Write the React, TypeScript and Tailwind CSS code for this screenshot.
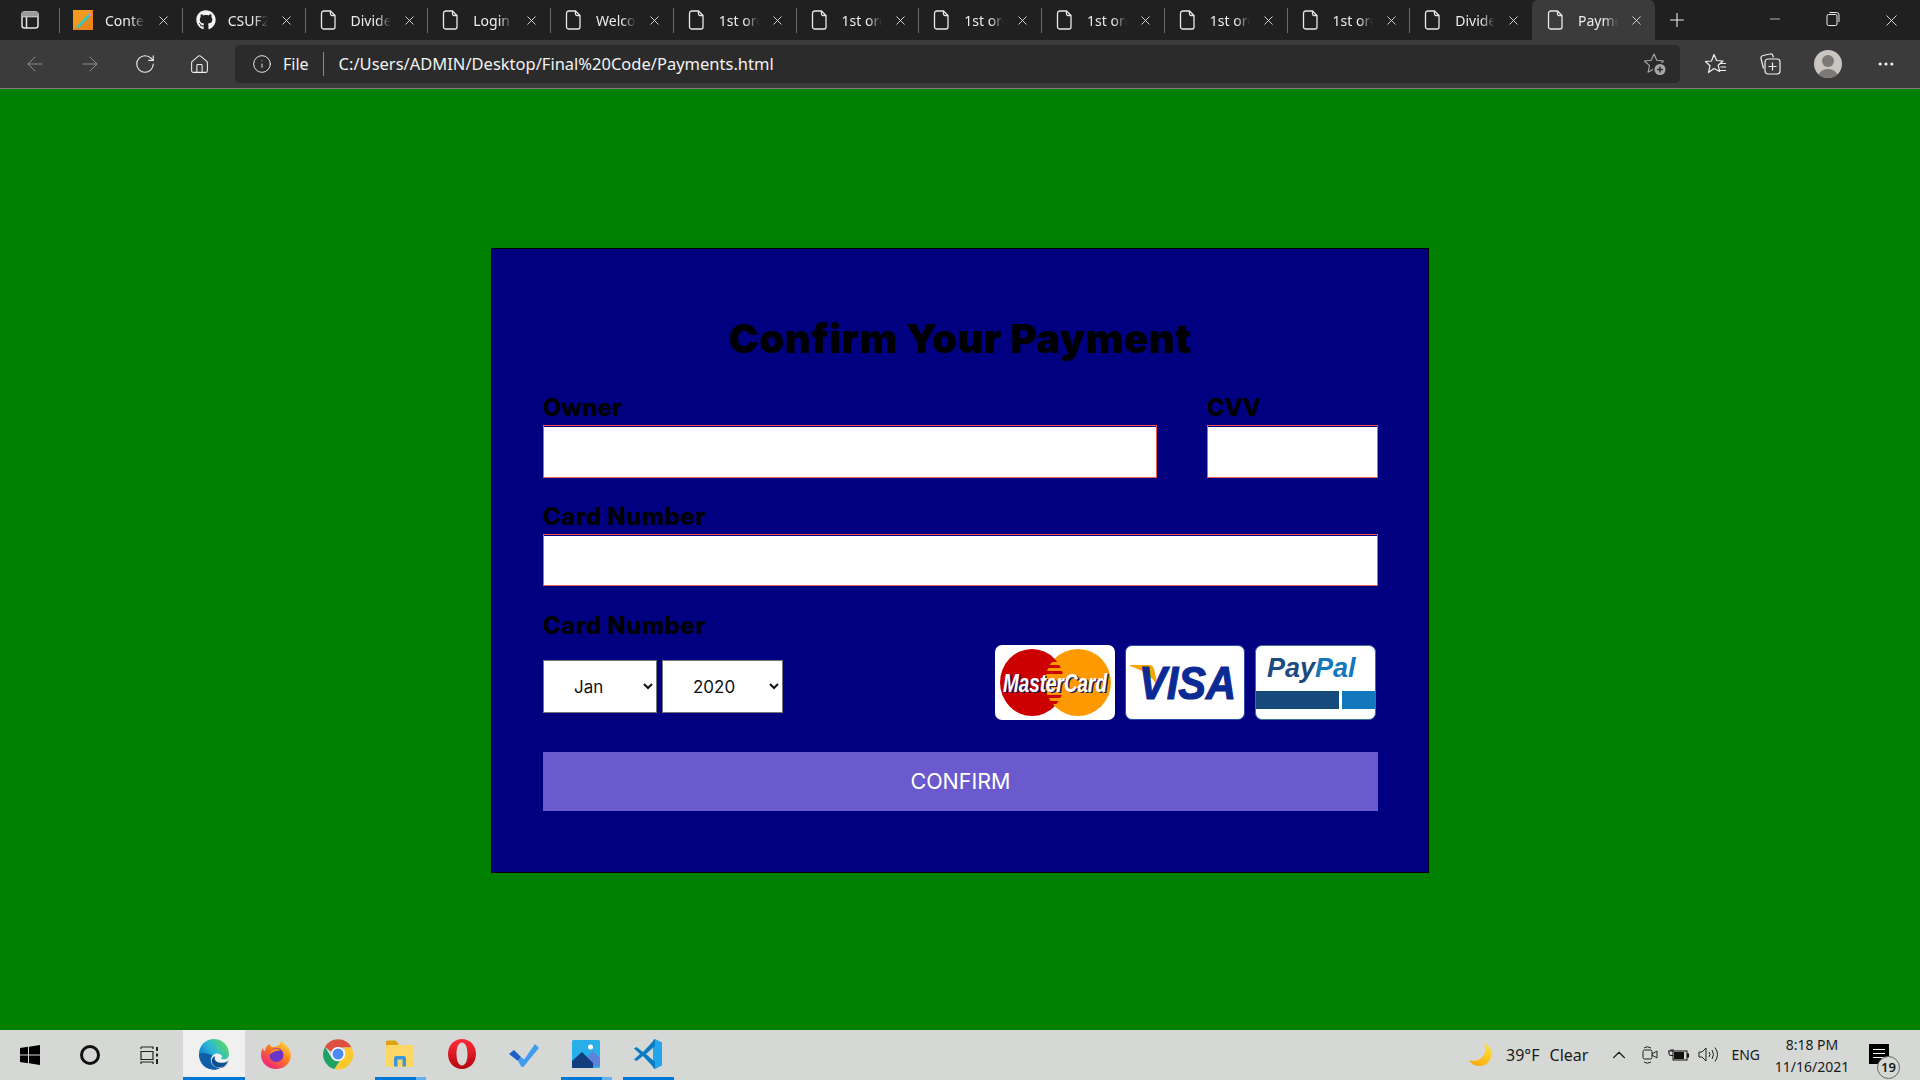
import { ArrowLeft, ArrowRight, ChevronUp, Home, Info, Minus, MoreHorizontal, Plus, RotateCw, X } from "lucide-react";
import { FaGithub } from "react-icons/fa";
import type { ReactNode } from "react";

type Tab = { title: string; icon: "pencil" | "github" | "file"; active?: boolean };

const tabs: Tab[] = [
  { title: "Content", icon: "pencil" },
  { title: "CSUF2", icon: "github" },
  { title: "Divide", icon: "file" },
  { title: "Login", icon: "file" },
  { title: "Welcome", icon: "file" },
  { title: "1st order", icon: "file" },
  { title: "1st order", icon: "file" },
  { title: "1st order", icon: "file" },
  { title: "1st order", icon: "file" },
  { title: "1st order", icon: "file" },
  { title: "1st order", icon: "file" },
  { title: "Divide", icon: "file" },
  { title: "Payment", icon: "file", active: true },
];

function FileIcon() {
  return (
    <svg width="20" height="22" viewBox="0 0 20 22" fill="none" stroke="#e8e8e8" strokeWidth="1.3">
      <path d="M4.5 2h7l4.500 4.500V18a2 2 0 0 1-2 2h-9.500a2 2 0 0 1-2-2V4.500A2.500 2.500 0 0 1 4.500 2z" />
      <path d="M11.500 2v3a1.500 1.500 0 0 0 1.500 1.500h3" />
    </svg>
  );
}

function PencilIcon() {
  return (
    <svg width="20" height="20" viewBox="0 0 20 20">
      <rect width="20" height="20" fill="#f29a1f" />
      <path d="M0 20 L20 0 V20 Z" fill="#e8861a" />
      <path d="M4 16 L15 4 L17.500 6 L6.500 17.500 L3 18 Z" fill="#3fc7b3" />
      <path d="M15 4 L16.500 2.500 L19 4.500 L17.500 6 Z" fill="#e88ab0" />
    </svg>
  );
}

function TabItem({ tab, first }: { tab: Tab; first: boolean }) {
  const showLine = !tab.active && !first;
  return (
    <div
      className={
        tab.active
          ? "relative flex h-10 w-[123px] shrink-0 items-center rounded-t-[6px] bg-[#3b3b3b] pl-[14px]"
          : "relative flex h-[40px] w-[122.75px] shrink-0 items-center pl-[14px]"
      }
    >
      {(showLine || first) && <span className="absolute left-0 top-2 h-[25px] w-px bg-[#6b6b6b]" />}
      <span className="flex w-[32px] shrink-0 items-center">
        {tab.icon === "pencil" && <PencilIcon />}
        {tab.icon === "github" && <FaGithub size={20} color="#f2f2f2" />}
        {tab.icon === "file" && <FileIcon />}
      </span>
      <span className="w-[40px] shrink-0 overflow-hidden whitespace-nowrap text-[14px] text-[#ececec] [mask-image:linear-gradient(90deg,#000_65%,transparent)]">
        {tab.title}
      </span>
      <X className="ml-[11px] shrink-0 text-[#e6e6e6]" size={15} strokeWidth={1.4} />
    </div>
  );
}

function TitleBar() {
  return (
    <div className="flex h-10 shrink-0 items-center bg-[#202020]">
      <div className="flex w-[59px] shrink-0 justify-center">
        <svg width="18" height="18" viewBox="0 0 18 18" fill="none" stroke="#e4e4e4" strokeWidth="1.500">
          <rect x="1" y="1" width="16" height="16" rx="2.500" />
          <path d="M1 5.500h16M5.500 5.500V17" />
          <path d="M1 1h16v4.500H1z" fill="#9b9b9b" stroke="none" />
        </svg>
      </div>
      {tabs.map((t, i) => (
        <TabItem key={i} tab={t} first={i === 0} />
      ))}
      <div className="flex w-[44px] justify-center">
        <Plus size={22} strokeWidth={1.2} className="text-[#ececec]" />
      </div>
      <div className="ml-auto flex">
        <div className="flex w-[58px] justify-center">
          <Minus size={16} strokeWidth={1.1} className="text-[#ececec]" />
        </div>
        <div className="flex w-[58px] justify-center">
          <svg width="14" height="15" viewBox="0 0 14 15" fill="none" stroke="#ececec" strokeWidth="1">
            <rect x="1" y="3.500" width="10" height="11" rx="1.500" />
            <path d="M3.500 1.500h7a2.500 2.500 0 0 1 2.500 2.500v7" />
          </svg>
        </div>
        <div className="flex w-[58px] justify-center">
          <X size={19} strokeWidth={1.1} className="text-[#ececec]" />
        </div>
      </div>
    </div>
  );
}

function ToolBtn({ w, children }: { w: string; children: ReactNode }) {
  return <div className={`flex h-full shrink-0 items-center justify-center ${w}`}>{children}</div>;
}

function ToolBar() {
  return (
    <div className="flex h-[49px] shrink-0 items-center border-b border-[#7d7d7d] bg-[#3b3b3b] pl-[7px]">
      <ToolBtn w="w-[55px]">
        <ArrowLeft size={24} strokeWidth={1} className="text-[#8c8c8c]" />
      </ToolBtn>
      <ToolBtn w="w-[55px]">
        <ArrowRight size={24} strokeWidth={1} className="text-[#8c8c8c]" />
      </ToolBtn>
      <ToolBtn w="w-[55px]">
        <RotateCw size={22} strokeWidth={1.2} className="text-[#efefef]" />
      </ToolBtn>
      <ToolBtn w="w-[55px]">
        <Home size={21} strokeWidth={1.2} className="text-[#efefef]" />
      </ToolBtn>
      <div className="ml-[8px] flex h-[38px] w-[1445px] shrink-0 items-center rounded-[5px] bg-[#2b2b2b] pl-[17px] pr-[13px] text-[#f2f2f2]">
        <Info size={20} strokeWidth={1.1} />
        <span className="ml-[11px] text-[16px]">File</span>
        <span className="ml-[14px] h-[24px] w-px bg-[#8a8a8a]" />
        <span className="ml-[15px] text-[16.5px]">C:/Users/ADMIN/Desktop/Final%20Code/Payments.html</span>
        <svg className="ml-auto" width="24" height="24" viewBox="0 0 24 24" fill="none" stroke="#a8a8a8" strokeWidth="1.100">
          <path d="M11 2l2.800 6.200 6.700.8-5 4.600 1.400 6.600-5.900-3.400L5.100 20.200l1.400-6.600-5-4.600 6.700-.8z" strokeLinejoin="round" />
          <circle cx="17" cy="17.500" r="7" fill="#2b2b2b" stroke="none" />
          <circle cx="17" cy="17.500" r="5.500" fill="#a8a8a8" stroke="none" />
          <path d="M17 14.500v6M14 17.500h6" stroke="#2b2b2b" strokeWidth="1.500" />
        </svg>
      </div>
      <ToolBtn w="w-[56px] ml-[8px]">
        <svg width="24" height="24" viewBox="0 0 24 24" fill="none" stroke="#efefef" strokeWidth="1.200">
          <path d="M10 2.500l2.600 6 6.400.5-4.800 4.300 1.500 6.200L10 16.500l-5.500 4 1.500-6.800L1.500 9.500 7.500 9z" strokeLinejoin="round" />
          <path d="M16 11.500h6M16.500 15h5.500M15.500 18.500h6.500" />
        </svg>
      </ToolBtn>
      <ToolBtn w="w-[52px]">
        <svg width="24" height="24" viewBox="0 0 24 24" fill="none" stroke="#efefef" strokeWidth="1.200">
          <path d="M5.500 16.500L3 6.500A2.500 2.500 0 0 1 5 3.500l7-1.500a2.500 2.500 0 0 1 3 1.800l.4 1.700" />
          <rect x="7" y="7" width="15" height="15" rx="3" />
          <path d="M14.500 10.500v8M10.500 14.500h8" />
        </svg>
      </ToolBtn>
      <ToolBtn w="w-[63px]">
        <div className="flex h-[28px] w-[28px] flex-col items-center overflow-hidden rounded-full bg-[#c9c6c1]">
          <span className="mt-[5px] h-[12px] w-[12px] shrink-0 rounded-full bg-[#7b7875]" />
          <span className="mt-[2px] h-[14px] w-[22px] shrink-0 rounded-t-full bg-[#7b7875]" />
        </div>
      </ToolBtn>
      <ToolBtn w="w-[54px]">
        <MoreHorizontal size={20} strokeWidth={1.800} className="text-[#efefef]" />
      </ToolBtn>
    </div>
  );
}

function MasterCardLogo() {
  return (
    <svg width="120" height="75" viewBox="0 0 120 75">
      <defs>
        <clipPath id="mcLens">
          <ellipse cx="37" cy="37.500" rx="32" ry="33.500" />
        </clipPath>
      </defs>
      <ellipse cx="37" cy="37.500" rx="32" ry="33.500" fill="#cc0000" />
      <ellipse cx="83" cy="37.500" rx="33" ry="33.500" fill="#ff9900" />
      <g clipPath="url(#mcLens)">
        <path d="M45 14h30v3H45zM45 20h30v3H45zM45 26h30v3H45zM45 50h30v3H45zM45 56h30v3H45zM45 62h30v3H45z" fill="#cc0000" />
      </g>
      <text x="9.500" y="48" textLength="104" lengthAdjust="spacingAndGlyphs" fontFamily="Liberation Sans" fontWeight="700" fontStyle="italic" fontSize="25" fill="#1a1a5e">MasterCard</text>
      <text x="8" y="46.500" textLength="104" lengthAdjust="spacingAndGlyphs" fontFamily="Liberation Sans" fontWeight="700" fontStyle="italic" fontSize="25" fill="#ffffff">MasterCard</text>
    </svg>
  );
}

function VisaLogo() {
  return (
    <svg width="120" height="75" viewBox="0 0 120 75">
      <path d="M5 20h19q4 0 5 4l4 17Q24 27 5 21z" fill="#f7a600" />
      <text x="14" y="54" textLength="97" lengthAdjust="spacingAndGlyphs" fontFamily="Liberation Sans" fontWeight="700" fontStyle="italic" fontSize="47" fill="#0b2a94" stroke="#0b2a94" strokeWidth="1.200">VISA</text>
    </svg>
  );
}

function PayPalLogo() {
  return (
    <div className="flex h-full w-full flex-col">
      <div className="ml-[11px] mt-[7px] h-[30px] whitespace-nowrap font-['Liberation_Sans'] text-[27px] font-bold italic leading-[30px]">
        <span className="text-[#1a4a80]">Pay</span>
        <span className="text-[#1278be]">Pal</span>
      </div>
      <div className="mt-[8px] flex h-[18px] gap-[3px]">
        <span className="w-[83px] bg-[#174a7c]" />
        <span className="flex-1 bg-[#1277bc]" />
      </div>
    </div>
  );
}

function PaymentCard() {
  const labelCls = "block h-[30px] font-['Inter'] text-[24px] font-extrabold leading-[30px] text-black";
  const inputCls = "mt-[2px] block h-[53px] w-full border border-[#f4574f] bg-white shadow-[inset_0_1px_0_#000080] outline-none";
  const selectCls = "h-[53px] border border-[#767676] bg-white pl-[26px] font-['Inter'] text-[17px] text-[#111]";
  return (
    <div className="h-[625px] w-[938px] border border-black bg-[#000080] pl-[51px] pr-[50px] pt-[59px]">
      <h1 className="h-[60px] text-center font-['Inter'] text-[40px] font-black leading-[62px] tracking-[0.5px] text-black">Confirm Your Payment</h1>
      <div className="mt-[25px] flex gap-[50px]">
        <div className="w-[614px]">
          <label className={labelCls}>Owner</label>
          <input className={inputCls} />
        </div>
        <div className="w-[171px]">
          <label className={`${labelCls} tracking-[-0.4px]`}>CVV</label>
          <input className={inputCls} />
        </div>
      </div>
      <div className="mt-[24px]">
        <label className={`${labelCls} tracking-[0.5px]`}>Card Number</label>
        <input className="mt-[2px] block h-[52px] w-full border border-[#f4574f] bg-white shadow-[inset_0_1px_0_#000080] outline-none" />
      </div>
      <div className="mt-[25px] flex justify-between">
        <div>
          <label className={`${labelCls} tracking-[0.5px]`}>Card Number</label>
          <div className="mt-[19px] flex gap-[5px]">
            <select className={`${selectCls} w-[114px]`}>
              <option>Jan</option>
            </select>
            <select className={`${selectCls} w-[121px]`}>
              <option>2020</option>
            </select>
          </div>
        </div>
        <div className="mt-[34px] flex h-[75px] gap-[10px] pr-[2px]">
          <div className="h-[75px] w-[120px] overflow-hidden rounded-[7px] bg-white">
            <MasterCardLogo />
          </div>
          <div className="h-[75px] w-[120px] overflow-hidden rounded-[7px] border border-[#2a4aa8] bg-white">
            <div className="-m-px">
              <VisaLogo />
            </div>
          </div>
          <div className="h-[75px] w-[121px] overflow-hidden rounded-[7px] border border-[#3f6f9a] bg-white">
            <PayPalLogo />
          </div>
        </div>
      </div>
      <button className="mt-[32px] block h-[59px] w-full bg-[#6a5acd] text-center font-['Inter'] text-[21.5px] text-white">CONFIRM</button>
    </div>
  );
}

function EdgeIcon() {
  return (
    <svg width="32" height="32" viewBox="0 0 32 32">
      <defs>
        <linearGradient id="edgeA" x1="0.9" y1="0.2" x2="0.1" y2="0.8">
          <stop offset="0" stopColor="#55d66c" />
          <stop offset="0.45" stopColor="#2bb9d8" />
          <stop offset="1" stopColor="#0c72c4" />
        </linearGradient>
      </defs>
      <path d="M16 1C7 1 1 8 1 16c0 5 2 10 6 13 4 2.500 11 3 15 1-4 0-8-2-9-6-1-4 1-7 4-8 3-1 6 0 7 2 .5 1-.5 2-1.500 2.500 3 1.500 8.500 1 8.500-4C31 7 24 1 16 1z" fill="url(#edgeA)" />
      <path d="M1 16c0 7 5 14 12.500 15.500 3 .5 6 .3 8.500-1.500-4 0-8-2-9-6-.8-3 0-5 1.500-6.500C10 15 4 14 1 16z" fill="#0f5ea8" />
      <path d="M31 21c-2 5-6 8-9 9 3 .3 7-2 9-9z" fill="#155b9f" />
      <path d="M22 29.500c3-.5 6-3 8-6.500-3 2-7 2.500-10.500 1-3-1.300-3.500-4-2-6-3 1-4.500 3.500-3.800 6 1 4 5 6 8.300 5.500z" fill="#0e4f91" />
    </svg>
  );
}

function FirefoxIcon() {
  return (
    <svg width="32" height="32" viewBox="0 0 32 32">
      <defs>
        <linearGradient id="foxA" x1="0.8" y1="0.1" x2="0.2" y2="0.9">
          <stop offset="0" stopColor="#ffd23a" />
          <stop offset="0.45" stopColor="#ff7a1c" />
          <stop offset="1" stopColor="#f0267a" />
        </linearGradient>
      </defs>
      <path d="M21 1c1 4 5 5 8 10 2.500 4 2.500 9 0 13-3 5-8 7-13 7C8 31 1 25 1 17c0-3 1-6 2-7 0 2 1 3 2 3 0-3 2-6 5-7-.5 2 1 3 3 3 2.500 0 4-1 6-2 2-1.500 2-4 2-6z" fill="url(#foxA)" />
      <circle cx="16.500" cy="17" r="7" fill="#6b35c9" />
      <path d="M9.500 17c0-3.500 3-6.500 7-6.500 2 0 3.500 1 3.500 2-3 0-4 1-5 1-2 .5-4 1.500-5.500 3.500z" fill="#ff8a1f" />
    </svg>
  );
}

function ChromeIcon() {
  return (
    <svg width="32" height="32" viewBox="0 0 32 32">
      <path d="M3 9A15 15 0 0 1 29.500 9.500H16a6.500 6.500 0 0 0-6.500 4.500z" fill="#dd4f3f" />
      <path d="M3 9l7 11.500A7 7 0 0 0 18 22.500L12.500 31A15 15 0 0 1 3 9z" fill="#1ea362" />
      <path d="M29.500 9.500A15 15 0 0 1 12.500 31L19.500 21A7 7 0 0 0 21.500 9.500z" fill="#fbc82e" />
      <circle cx="16" cy="16" r="7" fill="#fff" />
      <circle cx="16" cy="16" r="5.500" fill="#4a8af4" />
    </svg>
  );
}

function FolderIcon() {
  return (
    <svg width="30" height="30" viewBox="0 0 30 30">
      <path d="M1 3a1.500 1.500 0 0 1 1.500-1.500h8l3 3v3H1z" fill="#e0a30f" />
      <rect x="1" y="6" width="28" height="22" rx="1.500" fill="#fcd766" />
      <path d="M9 27.500V19a2 2 0 0 1 2-2h8a2 2 0 0 1 2 2v8.500h-3.500V20.500h-5v7z" fill="#3a97d8" />
    </svg>
  );
}

function OperaIcon() {
  return (
    <svg width="30" height="32" viewBox="0 0 30 32">
      <defs>
        <linearGradient id="opA" x1="0" y1="0" x2="0" y2="1">
          <stop offset="0" stopColor="#ff2d3a" />
          <stop offset="1" stopColor="#b5060f" />
        </linearGradient>
      </defs>
      <path fillRule="evenodd" d="M15 1c8 0 14 6.500 14 15s-6 15-14 15S1 24.500 1 16 7 1 15 1zm0 3.500c-3.500 0-5.500 5-5.500 11.500s2 11.500 5.500 11.500S20.500 22.500 20.500 16 18.500 4.500 15 4.500z" fill="url(#opA)" />
    </svg>
  );
}

function TodoIcon() {
  return (
    <svg width="32" height="28" viewBox="0 0 32 28">
      <path d="M13 24L27 4l4 4-15 18a2 2 0 0 1-3 0z" fill="#3f9df0" />
      <path d="M1 14l5-4 7 7-3 4z" fill="#1d5fc4" />
      <path d="M10 21l3-4 6 5-3 4a2 2 0 0 1-3 0z" fill="#3f9df0" />
    </svg>
  );
}

function PhotosIcon() {
  return (
    <svg width="28" height="28" viewBox="0 0 28 28">
      <rect width="28" height="28" rx="1.500" fill="#28aee8" />
      <circle cx="18.500" cy="7" r="2.500" fill="#fff" />
      <path d="M14 20l6-9 8 7v8H14z" fill="#5f83d9" />
      <path d="M0 21l10-9 11 11v5H0z" fill="#123e80" />
    </svg>
  );
}

function VsCodeIcon() {
  return (
    <svg width="30" height="32" viewBox="0 0 30 32">
      <path d="M22 1l7 3.500v23L22 31l-2-1V2z" fill="#24a4ec" />
      <path d="M22 1L10 14 3.500 9 1 10.500 7 16l-6 5.500L3.500 23 10 18l12 13v-7L13 16l9-8z" fill="#0a7cc4" />
    </svg>
  );
}

function TaskItem({ active, bar, children }: { active?: boolean; bar?: "full" | "split"; children: ReactNode }) {
  return (
    <div className={active ? "flex h-full w-[62px] flex-col items-center bg-[#eff0ef]" : "flex h-full w-[62px] flex-col items-center"}>
      <div className="flex flex-1 items-center justify-center pt-[1px]">{children}</div>
      {bar === "full" && <div className={active ? "h-[3px] w-full bg-[#0078d7]" : "h-[3px] w-[51px] bg-[#0078d7]"} />}
      {bar === "split" && (
        <div className="flex h-[3px] w-[51px]">
          <span className="w-[41px] bg-[#0078d7]" />
          <span className="flex-1 bg-[#65b0ec]" />
        </div>
      )}
      {!bar && <div className="h-[3px]" />}
    </div>
  );
}

function TaskBar() {
  return (
    <div className="flex h-[50px] shrink-0 items-center bg-[#d5d8d4] font-['Noto_Sans'] text-[#1a1a1a]">
      <div className="flex h-full w-[183px] shrink-0 items-center">
        <div className="flex w-[60px] justify-center">
          <svg width="20" height="20" viewBox="0 0 20 20" fill="#000">
            <path d="M0 3l8-1.200v7.700H0zM9 1.700L20 0v9.500H9zM0 10.500h8v7.700L0 17zM9 10.500h11V20L9 18.300z" />
          </svg>
        </div>
        <div className="flex w-[60px] justify-center">
          <span className="h-[20px] w-[20px] rounded-full border-[3px] border-[#111]" />
        </div>
        <div className="flex w-[60px] justify-center">
          <svg width="20" height="20" viewBox="0 0 20 20" fill="none" stroke="#222" strokeWidth="1.200">
            <path d="M1 2h12v2M1 2v2M1 6.500h12v8H1zM1 19v-2h12v2" />
            <path d="M17 2v4M17 8.500v3M17 14v5" strokeWidth="2" />
          </svg>
        </div>
      </div>
      <TaskItem active bar="full"><EdgeIcon /></TaskItem>
      <TaskItem><FirefoxIcon /></TaskItem>
      <TaskItem><ChromeIcon /></TaskItem>
      <TaskItem bar="split"><FolderIcon /></TaskItem>
      <TaskItem><OperaIcon /></TaskItem>
      <TaskItem><TodoIcon /></TaskItem>
      <TaskItem bar="split"><PhotosIcon /></TaskItem>
      <TaskItem bar="full"><VsCodeIcon /></TaskItem>

      <div className="ml-auto flex h-full items-center pr-[31px]">
        <svg width="24" height="24" viewBox="0 0 24 24">
          <defs>
            <linearGradient id="moonA" x1="0.8" y1="0" x2="0.2" y2="1">
              <stop offset="0" stopColor="#ffe23a" />
              <stop offset="1" stopColor="#f9a70a" />
            </linearGradient>
          </defs>
          <path d="M15 0a12 12 0 0 1-15 17A12 12 0 1 0 15 0z" fill="url(#moonA)" />
        </svg>
        <span className="ml-[13px] text-[16px] leading-none">39°F</span>
        <span className="ml-[10px] text-[16px] leading-none">Clear</span>
        <ChevronUp className="ml-[20px]" size={22} strokeWidth={1.200} />
        <svg className="ml-[12px]" width="16" height="20" viewBox="0 0 16 20" fill="none" stroke="#222" strokeWidth="1">
          <rect x="1" y="5" width="9" height="9" rx="1.500" />
          <path d="M10 9l5-3v7l-5-3M2 3q3-2.500 7 0M2 17q3 2.500 7 0" />
        </svg>
        <svg className="ml-[10px]" width="21" height="14" viewBox="0 0 21 14">
          <path d="M0 3h5V1M3 3v-2M1 3v3q0 1.500 2 1.500h2" fill="none" stroke="#111" strokeWidth="1" />
          <rect x="5" y="3" width="14" height="9" fill="none" stroke="#111" />
          <rect x="6" y="4" width="10" height="7" fill="#111" />
          <rect x="19" y="5.500" width="2" height="4" fill="#111" />
        </svg>
        <svg className="ml-[9px]" width="21" height="18" viewBox="0 0 21 18" fill="none" stroke="#222" strokeWidth="1">
          <path d="M1 6h3l4-4v13l-4-4H1zM11 6q2 2.500 0 5M14 4q3 4.500 0 9M17 1.500q5 7 0 14" />
        </svg>
        <span className="ml-[12px] text-[14px] leading-none">ENG</span>
        <div className="ml-[14px] flex w-[76px] flex-col items-center gap-[3px] text-[14px] leading-[19px]">
          <span>8:18 PM</span>
          <span>11/16/2021</span>
        </div>
        <div className="relative ml-[19px] mt-[14px] h-[20px] w-[20px] self-start bg-black">
          <span className="absolute left-[4px] top-[5px] h-px w-[12px] bg-white" />
          <span className="absolute left-[4px] top-[9px] h-px w-[12px] bg-white" />
          <span className="absolute left-[4px] top-[13px] h-px w-[12px] bg-white" />
          <span className="absolute left-[8px] top-[12px] flex h-[23px] w-[23px] items-center justify-center rounded-full border border-[#666] bg-[#d5d8d4] text-[13px] font-semibold">19</span>
        </div>
      </div>
    </div>
  );
}

export default function App() {
  return (
    <div className="flex h-screen w-full flex-col overflow-hidden font-['Noto_Sans',sans-serif]">
      <TitleBar />
      <ToolBar />
      <main className="flex flex-1 items-center justify-center bg-[#008000] pt-[2px]">
        <PaymentCard />
      </main>
      <TaskBar />
    </div>
  );
}
